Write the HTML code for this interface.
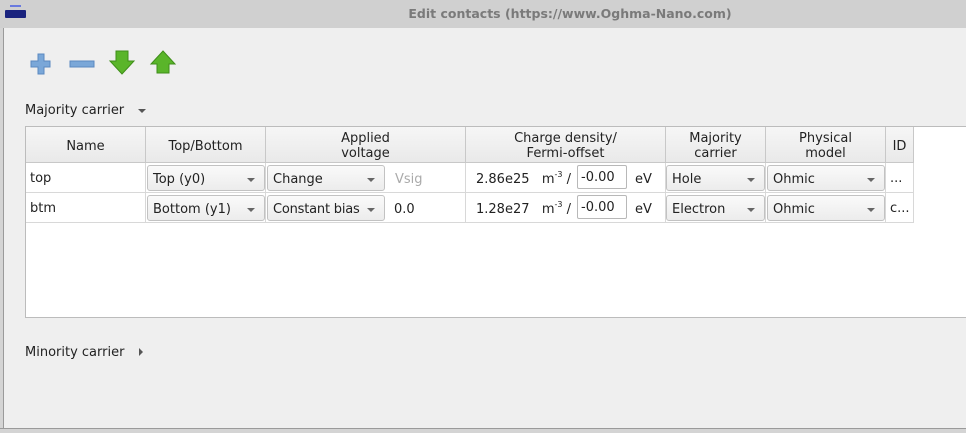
<!DOCTYPE html><html><head><style>
*{box-sizing:border-box}
body{margin:0;width:966px;height:433px;overflow:hidden;background:#efefef;font-family:"DejaVu Sans","Liberation Sans",sans-serif;font-size:13px;color:#222;position:relative}
.a{position:absolute}
.title{left:0;top:0;width:966px;height:28px;background:#d0d0d0;color:#7a7a7a;font-weight:bold;font-size:12.5px;line-height:28px;text-align:center;padding-left:174px}
.lf{left:0;top:28px;width:4px;height:405px;background:#d4d4d4;border-right:1px solid #9a9a9a}
.bt{left:0;top:428px;width:966px;height:5px;background:#d4d4d4;border-top:1px solid #9a9a9a}
.tbl{left:25px;top:126px;width:945px;height:192px;background:#fff;border:1px solid #bcbcbc}
.hd{top:0;height:36px;background:linear-gradient(#f6f6f6,#e9e9e9);border-right:1px solid #c8c8c8;border-bottom:1px solid #c8c8c8;text-align:center;display:flex;align-items:center;justify-content:center;line-height:15px;padding-top:3px}
.cell{height:30px;border-right:1px solid #d8d8d8;border-bottom:1px solid #d8d8d8;line-height:31px;padding-left:4px;white-space:nowrap}
.cb{height:26px;border:1px solid #c2c2c2;border-radius:3px;background:linear-gradient(#fafafa,#ececec);line-height:27px;padding-left:5px;white-space:nowrap}
.cb:after{content:"";position:absolute;right:9px;top:12px;border:4px solid transparent;border-top:4px solid #666;border-bottom:0}
.ed{height:24px;border:1px solid #b8b8b8;border-radius:2px;background:#fff;line-height:24px;padding-left:3px}
.t{line-height:15px}
sup{font-size:8px;line-height:0;position:relative;top:-1px}
</style></head><body>
<div class="a title">Edit contacts (https://www.Oghma-Nano.com)</div>
<div class="a" style="left:5px;top:10px;width:21px;height:8px;background:#1a237e;border-radius:1px"></div>
<div class="a" style="left:10px;top:5px;width:11px;height:2px;background:#6a7adf"></div>
<div class="a lf"></div><div class="a bt"></div>
<svg class="a" style="left:27px;top:49px" width="160" height="28">
<path d="M11 5h6v7h6v6h-6v7h-6v-7H4v-6h7z" fill="#7aa7d8" stroke="#5b88c0" stroke-width="1"/>
<rect x="43" y="12" width="24" height="6" fill="#7aa7d8" stroke="#5b88c0"/>
<path d="M89 2h12v10h6l-12 13-12-13h6z" fill="#5ab52a" stroke="#3f8e19"/>
<path d="M136 2l12 13h-6v9h-12v-9h-6z" fill="#5ab52a" stroke="#3f8e19"/>
</svg>
<div class="a t" style="left:25px;top:103px">Majority carrier</div>
<div class="a" style="left:138px;top:109px;border:4px solid transparent;border-top:4px solid #555"></div>
<div class="a tbl">
<div class="a hd" style="left:0;width:120px">Name</div>
<div class="a hd" style="left:120px;width:120px">Top/Bottom</div>
<div class="a hd" style="left:240px;width:200px">Applied<br>voltage</div>
<div class="a hd" style="left:440px;width:200px">Charge density/<br>Fermi-offset</div>
<div class="a hd" style="left:640px;width:100px">Majority<br>carrier</div>
<div class="a hd" style="left:740px;width:120px">Physical<br>model</div>
<div class="a hd" style="left:860px;width:28px">ID</div>

<div class="a cell" style="left:0;top:36px;width:120px">top</div>
<div class="a cell" style="left:120px;top:36px;width:120px"></div>
<div class="a cb" style="left:121px;top:38px;width:118px">Top (y0)</div>
<div class="a cell" style="left:240px;top:36px;width:200px"></div>
<div class="a cb" style="left:241px;top:38px;width:118px">Change</div>
<div class="a t" style="left:369px;top:45px;color:#aaa">Vsig</div>
<div class="a cell" style="left:440px;top:36px;width:200px"></div>
<div class="a t" style="left:450px;top:45px;white-space:nowrap">2.86e25&nbsp;&nbsp; m<sup>-3</sup> /</div>
<div class="a ed" style="left:551px;top:38px;width:50px">-0.00</div>
<div class="a t" style="left:609px;top:45px">eV</div>
<div class="a cell" style="left:640px;top:36px;width:100px"></div>
<div class="a cb" style="left:640px;top:38px;width:99px">Hole</div>
<div class="a cell" style="left:740px;top:36px;width:120px"></div>
<div class="a cb" style="left:741px;top:38px;width:118px">Ohmic</div>
<div class="a cell" style="left:860px;top:36px;width:28px">...</div>

<div class="a cell" style="left:0;top:66px;width:120px">btm</div>
<div class="a cell" style="left:120px;top:66px;width:120px"></div>
<div class="a cb" style="left:121px;top:68px;width:118px">Bottom (y1)</div>
<div class="a cell" style="left:240px;top:66px;width:200px"></div>
<div class="a cb" style="left:241px;top:68px;width:118px;letter-spacing:-0.2px">Constant bias</div>
<div class="a t" style="left:368px;top:75px">0.0</div>
<div class="a cell" style="left:440px;top:66px;width:200px"></div>
<div class="a t" style="left:450px;top:75px;white-space:nowrap">1.28e27&nbsp;&nbsp; m<sup>-3</sup> /</div>
<div class="a ed" style="left:551px;top:68px;width:50px">-0.00</div>
<div class="a t" style="left:609px;top:75px">eV</div>
<div class="a cell" style="left:640px;top:66px;width:100px"></div>
<div class="a cb" style="left:640px;top:68px;width:99px">Electron</div>
<div class="a cell" style="left:740px;top:66px;width:120px"></div>
<div class="a cb" style="left:741px;top:68px;width:118px">Ohmic</div>
<div class="a cell" style="left:860px;top:66px;width:28px">c...</div>
</div>
<div class="a t" style="left:25px;top:345px">Minority carrier</div>
<div class="a" style="left:139px;top:348px;border:4px solid transparent;border-left:4px solid #555;border-right:0"></div>
</body></html>
